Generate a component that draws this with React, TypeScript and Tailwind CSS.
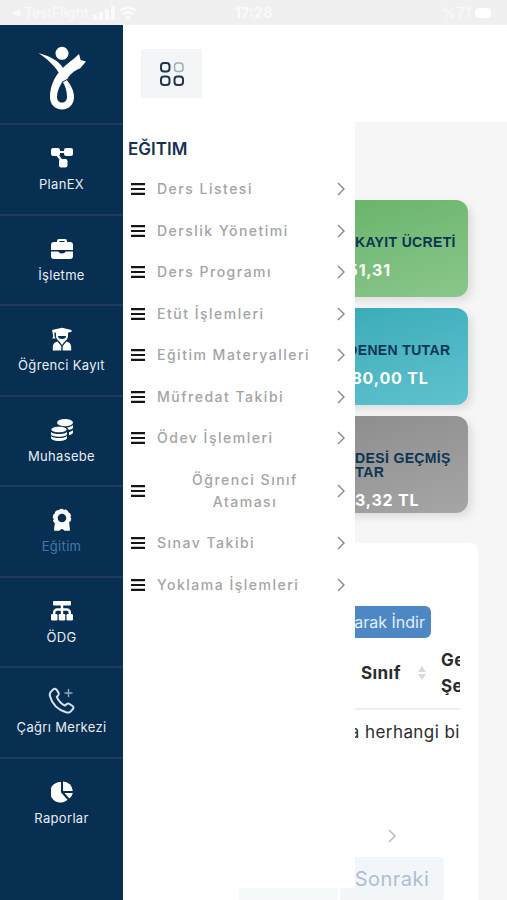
import type { ReactNode } from "react";

const navItems: { label: string; icon: ReactNode; active?: boolean }[] = [
  { label: "PlanEX", icon: <ProjectIcon /> },
  { label: "İşletme", icon: <ToolboxIcon /> },
  { label: "Öğrenci Kayıt", icon: <StudentIcon /> },
  { label: "Muhasebe", icon: <CoinsIcon /> },
  { label: "Eğitim", icon: <AwardIcon />, active: true },
  { label: "ÖDG", icon: <SitemapIcon /> },
  { label: "Çağrı Merkezi", icon: <CallIcon /> },
  { label: "Raporlar", icon: <PieIcon /> },
];

const menuItems = [
  "Ders Listesi",
  "Derslik Yönetimi",
  "Ders Programı",
  "Etüt İşlemleri",
  "Eğitim Materyalleri",
  "Müfredat Takibi",
  "Ödev İşlemleri",
  "Öğrenci Sınıf Ataması",
  "Sınav Takibi",
  "Yoklama İşlemleri",
];

const stats = [
  { title: "N. KAYIT ÜCRETİ", value: "451,31", tone: "bg-linear-to-br from-[#5aad5c] to-[#8ac68c]" },
  { title: "ÖDENEN TUTAR", value: "1180,00 TL", tone: "bg-linear-to-br from-[#26a2b0] to-[#5fc2ce]" },
  { title: "VADESİ GEÇMİŞ TUTAR", value: "613,32 TL", tone: "bg-linear-to-br from-[#838383] to-[#a6a6a6]" },
];

function ProjectIcon() {
  return (
    <svg width="22" height="20" viewBox="0 0 22 20" fill="#fff">
      <rect x="0" y="0" width="9" height="8" rx="2.200" />
      <rect x="13" y="0" width="9" height="8" rx="2.200" />
      <rect x="8" y="11" width="8.500" height="8.500" rx="2.200" />
      <path d="M8 4h6M6 6.500l4.500 6" stroke="#fff" strokeWidth="2.200" />
    </svg>
  );
}

function ToolboxIcon() {
  return (
    <svg width="22" height="22" viewBox="0 0 22 22" fill="#fff">
      <path
        fillRule="evenodd"
        d="M6 4V3a2 2 0 0 1 2-2h6a2 2 0 0 1 2 2v1h3a3 3 0 0 1 3 3v5H0V7a3 3 0 0 1 3-3Zm2.500 0h5V3h-5Z"
      />
      <path d="M0 13.500h7.500c.4 1.300 1.500 2 3.500 2s3.100-.7 3.500-2H22V18a3 3 0 0 1-3 3H3a3 3 0 0 1-3-3Z" />
    </svg>
  );
}

function StudentIcon() {
  return (
    <svg width="20" height="24" viewBox="0 0 20 24" fill="#fff">
      <path d="M0 3 10 .8 19.500 3v1.800L16 5.700V8H4V5.800L2.500 5.500V9l1 2.500H.3L1.200 9Z" />
      <path fillRule="evenodd" d="M4 6.500h12V9a6 6 0 0 1-12 0Zm2 2.500a4 3 0 0 0 8 0Z" />
      <path d="M5.500 14.500 9.300 19v4.500H.8V20c0-3 2-5 4.700-5.500ZM14.500 14.500 10.700 19v4.500h8.500V20c0-3-2-5-4.700-5.500Z" />
      <path d="M7 14h6l-3 4Z" />
    </svg>
  );
}

function CoinsIcon() {
  return (
    <svg width="22" height="22" viewBox="0 0 22 22" fill="#fff">
      <ellipse cx="14" cy="3.600" rx="8" ry="3.600" />
      <path d="M22 6v2.500c0 1-1.600 2-4.200 2.600-.3-1-1.100-1.900-2.200-2.600C18.600 8.200 21 7.300 22 6Zm0 5v2.500c0 1.200-1.600 2.200-4 2.700v-3c1.800-.5 3.200-1.200 4-2.200Z" />
      <ellipse cx="8" cy="10.500" rx="8" ry="3.300" stroke="#072c4f" strokeWidth=".8" />
      <path d="M0 13c1.500 1.400 4.500 2.100 8 2.100s6.500-.7 8-2.100v2c0 1.700-3.600 2.800-8 2.800S0 16.700 0 15Zm0 4c1.500 1.400 4.500 2.100 8 2.100s6.500-.7 8-2.100v1.800C16 20.800 12.400 22 8 22s-8-1.200-8-3.200Z" />
    </svg>
  );
}

function AwardIcon() {
  return (
    <svg width="20" height="24" viewBox="0 0 20 24" fill="none" stroke="#fff" strokeLinejoin="round">
      <circle cx="10" cy="10" r="6.500" strokeWidth="4.400" />
      <circle cx="10" cy="10" r="8.600" strokeWidth="1.200" strokeDasharray="3.400 2" />
      <path d="M3.500 16 2.800 22h4L10 19.500l3.200 2.500h4l-.7-6L10 17Z" fill="#fff" strokeWidth="1.600" />
    </svg>
  );
}

function SitemapIcon() {
  return (
    <svg width="22" height="20" viewBox="0 0 22 20" fill="#fff">
      <rect x="2" y="0" width="18" height="4.500" rx="1" />
      <rect x="0" y="13" width="6.500" height="6.500" rx="1.200" />
      <rect x="7.750" y="13" width="6.500" height="6.500" rx="1.200" />
      <rect x="15.500" y="13" width="6.500" height="6.500" rx="1.200" />
      <path d="M11 4v10M3.200 14v-2.500a3 3 0 0 1 3-3h9.600a3 3 0 0 1 3 3V14" fill="none" stroke="#fff" strokeWidth="2.400" />
    </svg>
  );
}

function CallIcon() {
  return (
    <svg width="28" height="28" viewBox="0 0 28 28" fill="none" strokeLinejoin="round" strokeLinecap="round">
      <path
        d="M3 4.600 5.400 2.300c1-1 2.300-.8 3.100.3l2 3c.6 1 .5 2-.3 2.800L8.800 9.900c1.600 3.900 4.200 6.800 8 8.700l1.900-1.500c.9-.7 1.900-.7 2.800-.1l3 2c1.100.8 1.300 2 .4 3l-2.100 2.300c-1.100 1.200-2.900 1.500-4.700 1C9.600 22.700 4 16.700 2 9.300c-.5-1.800-.2-3.500 1-4.700Z"
        stroke="#d5e2ef"
        strokeWidth="2"
      />
      <path d="M20.500 2.500v7M17 6h7" stroke="#8ea6bd" strokeWidth="1.500" />
    </svg>
  );
}

function PieIcon() {
  return (
    <svg width="22" height="22" viewBox="0 0 22 22" fill="#fff">
      <path d="M10 1v10.500l6.500 7.200A10.300 10.300 0 1 1 10 1Z" />
      <path d="M12 .5A10 10 0 0 1 21.800 10H12Z" />
      <path d="M13.500 12h8.300a9 9 0 0 1-3.500 5.600Z" />
    </svg>
  );
}

function Logo() {
  return (
    <svg width="48" height="64" viewBox="0 0 48 64" role="img" aria-label="PlanEX">
      <circle cx="24" cy="7.300" r="6.500" fill="#fff" />
      <path d="M.5 7C11 10 21 14.500 25.500 22.500L21 27C16 19 9 13 .5 7Z" fill="#fff" />
      <path
        fill="#fff"
        fillRule="evenodd"
        d="M41 8 42.700 14 48 15.500 42 22.500C36 24.500 31 29 28.800 34 33 39 36 45 36 51 36 58.500 31 63.500 24 63.500S12 58.500 12 51C12 41 16 31 23 24 28 18 35 14 41 8ZM24.500 35.500C21 41 19 46 19 51 19 54.500 21 56.500 24 56.500S29 54.500 29 51C29 46 27.500 40 24.500 35.500Z"
      />
      <path d="M24 36.500 29 33.500" stroke="#072f52" strokeWidth="1" />
    </svg>
  );
}

function Chevron({ className }: { className: string }) {
  return (
    <svg width="8" height="14" viewBox="0 0 8 14" fill="none" className={className}>
      <path d="m1 1 6 6-6 6" stroke="currentColor" strokeWidth="1.400" />
    </svg>
  );
}

function StatusBar() {
  return (
    <div className="grid h-[25px] shrink-0 grid-cols-3 items-center bg-[#f0f0f0] px-3 text-[15px] leading-5 text-[#fafafa]">
      <div className="flex items-center gap-1">
        <svg width="8" height="8" viewBox="0 0 8 8" fill="currentColor">
          <path d="M0 4 8 0v8Z" />
        </svg>
        <span className="text-sm">TestFlight</span>
        <svg width="22" height="14" viewBox="0 0 22 14" fill="currentColor">
          <path d="M0 9h4v5H0ZM6 6h4v8H6ZM12 3h4v11h-4ZM18 0h4v14h-4Z" />
        </svg>
        <svg width="18" height="14" viewBox="0 0 18 14" fill="none" stroke="currentColor" strokeWidth="2.500">
          <path d="M1 5a11.500 11.500 0 0 1 16 0M4 8.500a7 7 0 0 1 10 0" />
          <circle cx="9" cy="12" r="1" />
        </svg>
      </div>
      <div className="text-center font-semibold">17:28</div>
      <div className="flex items-center justify-end gap-1 pr-1">
        <span>%71</span>
        <span className="h-2.5 w-4 rounded-sm bg-white" />
      </div>
    </div>
  );
}

function Sidebar() {
  return (
    <nav className="flex w-[123px] shrink-0 flex-col bg-[#072f52]">
      <div className="flex h-[98px] shrink-0 justify-center pt-[21px]">
        <Logo />
      </div>
      <div className="grid h-[724px] shrink-0 grid-rows-8">
        {navItems.map((item) => (
          <a
            key={item.label}
            href="#"
            className="flex flex-col items-center gap-0.5 border-t-2 border-[#1f3a5b] pt-[19px]"
          >
            <span className="flex h-7 items-center text-white">{item.icon}</span>
            <span
              className={
                item.active
                  ? "text-[13px] leading-[21px] tracking-wide text-[#4377aa]"
                  : "text-[13px] leading-[21px] tracking-wide text-[#e6edf4]"
              }
            >
              {item.label}
            </span>
          </a>
        ))}
      </div>
    </nav>
  );
}

function Submenu() {
  return (
    <aside className="absolute top-0 bottom-3 left-0 w-[232px] bg-white">
      <h2 className="px-[5px] pt-[17px] pb-[10px] text-[17px] leading-5 font-semibold text-[#16314f]">EĞITIM</h2>
      <ul className="flex h-[436px] flex-col justify-between">
        {menuItems.map((item) => (
          <li key={item}>
            <a href="#" className="flex items-center justify-between py-[9px] pr-[10px] pl-2">
              <svg width="14" height="12" viewBox="0 0 14 12" fill="#151515" className="shrink-0">
                <path d="M0 0h14v2.200H0ZM0 4.900h14v2.200H0ZM0 9.800h14v2.200H0Z" />
              </svg>
              <span
                className={
                  item.length > 20
                    ? "flex-1 pr-5 pl-7 text-center text-sm leading-[22px] font-medium tracking-[1.5px] text-[#a3a4a6]"
                    : "flex-1 px-3 text-sm leading-[22px] font-medium tracking-[1.5px] text-[#a3a4a6]"
                }
              >
                {item}
              </span>
              <Chevron className="shrink-0 text-[#85868a]" />
            </a>
          </li>
        ))}
      </ul>
    </aside>
  );
}

function Stats() {
  return (
    <section className="flex flex-col gap-[11px] pt-[78px] pr-[39px] pl-7">
      {stats.map((stat) => (
        <div
          key={stat.title}
          className={`flex h-[97px] flex-col items-end rounded-xl pt-[35px] shadow-[4px_4px_8px_rgba(0,0,0,0.1)] ${stat.tone}`}
        >
          <div className="w-[132px]">
            <h3 className="font-['Liberation_Sans',sans-serif] text-sm leading-[14px] font-bold tracking-wide text-[#0b3553]">
              {stat.title}
            </h3>
            <p className="pt-[10px] text-base leading-[22px] font-bold tracking-wider text-white">{stat.value}</p>
          </div>
        </div>
      ))}
    </section>
  );
}

function Results() {
  return (
    <section className="mt-[30px] mr-[29px] flex-1 rounded-t-lg bg-white px-[18px] pt-[63px]">
      <div className="flex justify-end pr-[29px]">
        <button className="h-8 rounded-md bg-[#4d88c4] px-1.5 text-base text-[#e2effc]">Excel Olarak İndir</button>
      </div>
      <div className="overflow-hidden">
        <table className="ml-[198px] text-[17px] tracking-wide text-[#2b2b2d]">
          <thead>
            <tr className="border-b-2 border-[#ededed]">
              <th className="py-[9px] pl-[22px] text-left leading-[26px] font-bold">
                <span className="flex w-[65px] items-center justify-between">
                  Sınıf
                  <svg width="8" height="14" viewBox="0 0 8 14" fill="#d9d9db">
                    <path d="M0 6 4 0l4 6ZM0 8h8l-4 6Z" />
                  </svg>
                </span>
              </th>
              <th className="py-[9px] pl-[15px] text-left leading-[26px] font-bold">
                Genel
                <br />
                Şehir
              </th>
            </tr>
          </thead>
          <tbody>
            <tr>
              <td colSpan={2} className="pt-2.5 leading-6 whitespace-nowrap">
                da herhangi bir
              </td>
            </tr>
          </tbody>
        </table>
      </div>
      <div className="flex justify-end pt-[85px] pr-16">
        <Chevron className="text-[#b4b4b8]" />
      </div>
      <div className="flex justify-end gap-0.5 pt-[14px] pr-4">
        <div className="h-11 w-[99px] bg-[#f6f9fa]" />
        <button className="h-11 w-[104px] rounded-sm bg-[#f3f6f9] text-xl tracking-wide text-[#b0bdd6]">Sonraki</button>
      </div>
    </section>
  );
}

export default function App() {
  return (
    <div className="flex h-screen flex-col overflow-hidden bg-white font-[Inter,'Noto_Sans',sans-serif]">
      <StatusBar />
      <div className="flex min-h-0 flex-1">
        <Sidebar />
        <div className="flex min-w-0 flex-1 flex-col">
          <header className="flex h-[97px] shrink-0 bg-white px-[18px] pt-6">
            <button aria-label="Menü" className="flex h-[49px] w-[61px] items-center justify-center bg-[#f3f5f7]">
              <svg width="26" height="26" viewBox="0 0 26 26" fill="none" stroke="#203550" strokeWidth="2">
                <rect x="2" y="2" width="8.500" height="8.500" rx="3" />
                <rect x="15.500" y="2" width="8.500" height="8.500" rx="3" stroke="#a3adb8" strokeWidth="1.500" />
                <rect x="2" y="15.500" width="8.500" height="8.500" rx="3" />
                <rect x="15.500" y="15.500" width="8.500" height="8.500" rx="3" />
              </svg>
            </button>
          </header>
          <main className="relative flex min-h-0 flex-1 flex-col bg-[#f6f6f6]">
            <Stats />
            <Results />
            <Submenu />
          </main>
        </div>
      </div>
    </div>
  );
}
